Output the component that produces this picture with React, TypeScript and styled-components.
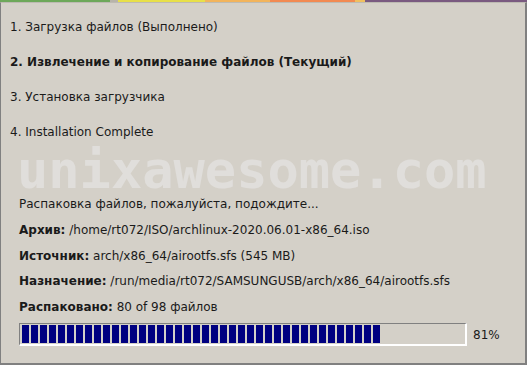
import React from 'react';
import styled, { createGlobalStyle } from 'styled-components';

const GlobalStyle = createGlobalStyle`
  html, body {
    margin: 0;
    padding: 0;
    background: #d4d0c8;
  }
  body {
    font-family: "DejaVu Sans", sans-serif;
    font-size: 12px;
    color: #1a1a1a;
  }
`;

const wallpaper = [
  { color: '#6da85a', width: 110 },
  { color: '#b8b4aa', width: 8 },
  { color: '#e8e04a', width: 87 },
  { color: '#f2b45c', width: 65 },
  { color: '#f28a52', width: 85 },
  { color: '#f0c060', width: 10 },
  { color: '#7a5a80', width: 162 },
];

const steps = [
  { label: '1. Загрузка файлов (Выполнено)', current: false },
  { label: '2. Извлечение и копирование файлов (Текущий)', current: true },
  { label: '3. Установка загрузчика', current: false },
  { label: '4. Installation Complete', current: false },
];

const details = [
  { key: 'Архив:', value: '/home/rt072/ISO/archlinux-2020.06.01-x86_64.iso' },
  { key: 'Источник:', value: 'arch/x86_64/airootfs.sfs (545 MB)' },
  { key: 'Назначение:', value: '/run/media/rt072/SAMSUNGUSB/arch/x86_64/airootfs.sfs' },
  { key: 'Распаковано:', value: '80 of 98 файлов' },
];

const percent = 81;
const blockCount = 40;

export default function App() {
  return (
    <>
      <GlobalStyle />
      <Strip>
        {wallpaper.map((w, i) => (
          <StripPart key={i} $color={w.color} style={{ width: w.width }} />
        ))}
      </Strip>
      <Window>
        <Steps>
          {steps.map((s) => (
            <Step key={s.label} $current={s.current}>
              {s.label}
            </Step>
          ))}
        </Steps>
        <Watermark>unixawesome.com</Watermark>
        <Status>Распаковка файлов, пожалуйста, подождите...</Status>
        <Details>
          {details.map((d) => (
            <DetailRow key={d.key}>
              <b>{d.key}</b> {d.value}
            </DetailRow>
          ))}
        </Details>
        <ProgressRow>
          <ProgressTrack>
            {Array.from({ length: blockCount }).map((_, i) => (
              <Block key={i} />
            ))}
          </ProgressTrack>
          <Percent>{percent}%</Percent>
        </ProgressRow>
      </Window>
    </>
  );
}

const Strip = styled.div`
  display: flex;
  height: 2px;
`;

const StripPart = styled.div<{ $color: string }>`
  flex: none;
  background: ${(p) => p.$color};
`;

const Window = styled.div`
  box-sizing: border-box;
  height: 363px;
  border-left: 1px solid #808080;
  border-right: 2px solid #808080;
  border-bottom: 2px solid #808080;
  border-top: 1px solid #bdbab2;
  display: flex;
  flex-direction: column;
`;

const Steps = styled.div`
  display: flex;
  flex-direction: column;
  padding: 7px 0 0 9px;
`;

const Step = styled.div<{ $current: boolean }>`
  line-height: 35px;
  font-weight: ${(p) => (p.$current ? 'bold' : 'normal')};
`;

const Watermark = styled.div`
  font-family: "DejaVu Sans Mono", monospace;
  font-weight: bold;
  font-size: 52px;
  line-height: 40px;
  height: 40px;
  margin-top: 0;
  margin-bottom: 4px;
  color: #e0dedb;
  padding-left: 16px;
  white-space: nowrap;
`;

const Status = styled.div`
  padding-left: 18px;
  line-height: 20px;
`;

const Details = styled.div`
  display: flex;
  flex-direction: column;
  padding-left: 18px;
  margin-top: 4px;
`;

const DetailRow = styled.div`
  line-height: 25.5px;
`;

const ProgressRow = styled.div`
  display: flex;
  align-items: center;
  padding-left: 18px;
  margin-top: 3px;
`;

const ProgressTrack = styled.div`
  box-sizing: border-box;
  width: 448px;
  height: 23px;
  border-top: 1px solid #808080;
  border-left: 1px solid #808080;
  border-bottom: 2px solid #ffffff;
  border-right: 2px solid #ffffff;
  padding: 1px 1px 1px 2px;
  display: flex;
  gap: 2px;
`;

const Block = styled.div`
  width: 7px;
  height: 18px;
  background: #000080;
  flex: none;
`;

const Percent = styled.div`
  margin-left: 6px;
`;
